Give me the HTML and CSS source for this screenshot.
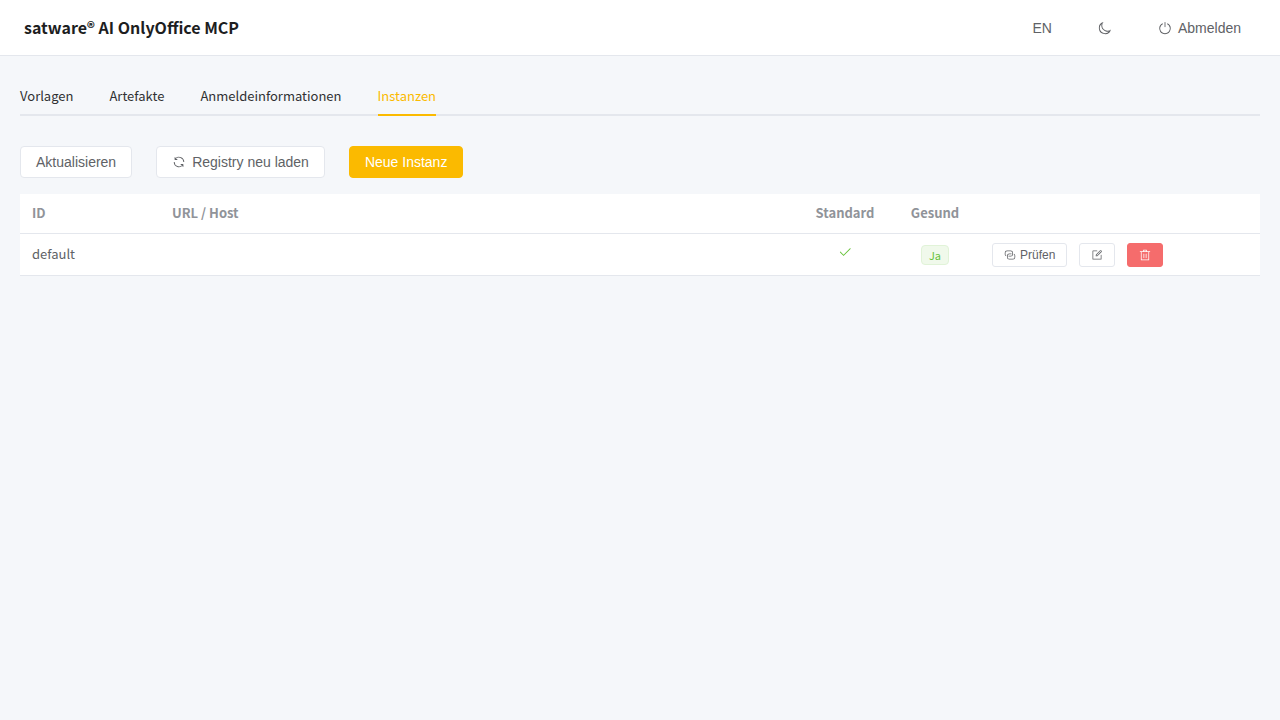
FILE: index.html
```html
<!DOCTYPE html>
<html lang="de">
<head>
  <meta charset="utf-8">
  <meta name="viewport" content="width=device-width, initial-scale=1">
  <title>satware® AI OnlyOffice MCP</title>
  <link rel="stylesheet" href="styles.css">
</head>
<body>
  <header class="topbar">
    <h1 class="brand">satware® AI OnlyOffice MCP</h1>
    <div class="topbar-actions">
      <button class="btn btn-text" type="button">EN</button>
      <button class="btn btn-text" type="button" aria-label="Dunkles Design">
        <svg class="icon" viewBox="0 0 1024 1024" aria-hidden="true"><path d="M240.448 240.448a384 384 0 1 0 559.424 525.696 448 448 0 0 1-542.016-542.08 391 391 0 0 0-17.408 16.384m181.056 362.048a384 384 0 0 0 525.632 16.384A448 448 0 1 1 405.056 76.8a384 384 0 0 0 16.448 525.696"/></svg>
      </button>
      <button class="btn btn-text" type="button">
        <svg class="icon" viewBox="0 0 1024 1024" aria-hidden="true"><path d="M352 159.872V230.4a352 352 0 1 0 320 0v-70.528A416.128 416.128 0 0 1 512 960a416 416 0 0 1-160-800.128z"/><path d="M512 64q32 0 32 32v320q0 32-32 32t-32-32V96q0-32 32-32"/></svg>
        Abmelden
      </button>
    </div>
  </header>

  <main class="content">
    <nav class="tabs">
      <a class="tab" href="#vorlagen">Vorlagen</a>
      <a class="tab" href="#artefakte">Artefakte</a>
      <a class="tab" href="#anmeldeinformationen">Anmeldeinformationen</a>
      <a class="tab tab-active" href="#instanzen" aria-current="page">Instanzen</a>
    </nav>

    <div class="toolbar">
      <button class="btn" type="button">Aktualisieren</button>
      <button class="btn" type="button">
        <svg class="icon" viewBox="0 0 1024 1024" aria-hidden="true"><path d="M771.776 794.88A384 384 0 0 1 128 512h64a320 320 0 0 0 555.712 216.448H654.72a32 32 0 1 1 0-64h149.056a32 32 0 0 1 32 32v148.928a32 32 0 1 1-64 0v-50.56zM276.288 295.616h92.992a32 32 0 0 1 0 64H220.16a32 32 0 0 1-32-32V178.56a32 32 0 0 1 64 0v50.56A384 384 0 0 1 896.128 512h-64a320 320 0 0 0-555.776-216.384z"/></svg>
        Registry neu laden
      </button>
      <button class="btn btn-primary" type="button">Neue Instanz</button>
    </div>

    <table class="table">
      <colgroup>
        <col class="col-id">
        <col>
        <col class="col-flag">
        <col class="col-flag">
        <col class="col-actions">
      </colgroup>
      <thead>
        <tr>
          <th scope="col">ID</th>
          <th scope="col">URL / Host</th>
          <th class="center" scope="col">Standard</th>
          <th class="center" scope="col">Gesund</th>
          <td></td>
        </tr>
      </thead>
      <tbody>
        <tr>
          <td>default</td>
          <td></td>
          <td class="center">
            <svg class="icon icon-check" viewBox="0 0 1024 1024" role="img" aria-label="Standard"><path d="M406.656 706.944 195.84 496.256a32 32 0 1 0-45.248 45.248l256 256 512-512a32 32 0 0 0-45.248-45.248L406.592 706.944z"/></svg>
          </td>
          <td class="center"><span class="tag">Ja</span></td>
          <td class="actions">
            <div class="row-actions">
              <button class="btn btn-small" type="button">
                <svg class="icon" viewBox="0 0 1024 1024" aria-hidden="true"><path d="M640 384v64H448a128 128 0 0 0-128 128v128a128 128 0 0 0 128 128h320a128 128 0 0 0 128-128V576a128 128 0 0 0-64-110.848V394.88c74.56 26.368 128 97.472 128 181.056v128a192 192 0 0 1-192 192H448a192 192 0 0 1-192-192V576a192 192 0 0 1 192-192z"/><path d="M384 640v-64h192a128 128 0 0 0 128-128V320a128 128 0 0 0-128-128H256a128 128 0 0 0-128 128v128a128 128 0 0 0 64 110.848v70.272A192.06 192.06 0 0 1 64 448V320a192 192 0 0 1 192-192h320a192 192 0 0 1 192 192v128a192 192 0 0 1-192 192z"/></svg>
                Prüfen
              </button>
              <button class="btn btn-small" type="button" aria-label="Bearbeiten">
                <svg class="icon" viewBox="0 0 1024 1024" aria-hidden="true"><path d="M832 512a32 32 0 1 1 64 0v352a32 32 0 0 1-32 32H160a32 32 0 0 1-32-32V160a32 32 0 0 1 32-32h352a32 32 0 0 1 0 64H192v640h640z"/><path d="m469.952 554.24 52.8-7.552L847.104 222.4a32 32 0 1 0-45.248-45.248L477.44 501.44l-7.552 52.8zm422.4-422.4a96 96 0 0 1 0 135.808l-331.84 331.84a32 32 0 0 1-18.112 9.088L436.8 623.68a32 32 0 0 1-36.224-36.224l15.104-105.6a32 32 0 0 1 9.024-18.112l331.904-331.84a96 96 0 0 1 135.744 0z"/></svg>
              </button>
              <button class="btn btn-small btn-danger" type="button" aria-label="Löschen">
                <svg class="icon" viewBox="0 0 1024 1024" aria-hidden="true"><path d="M160 256H96a32 32 0 0 1 0-64h256V95.936a32 32 0 0 1 32-32h256a32 32 0 0 1 32 32V192h256a32 32 0 1 1 0 64h-64v672a32 32 0 0 1-32 32H192a32 32 0 0 1-32-32zm448-64v-64H416v64zM224 896h576V256H224zm192-128a32 32 0 0 1-32-32V416a32 32 0 0 1 64 0v320a32 32 0 0 1-32 32m192 0a32 32 0 0 1-32-32V416a32 32 0 0 1 64 0v320a32 32 0 0 1-32 32"/></svg>
              </button>
            </div>
          </td>
        </tr>
      </tbody>
    </table>
  </main>
</body>
</html>
```

FILE: styles.css
```css
* {
  box-sizing: border-box;
}

body {
  margin: 0;
  background: #f5f7fa;
  color: #606266;
  font-family: "Noto Sans CJK SC", "Noto Sans", sans-serif;
  font-size: 13px;
}

.topbar {
  display: flex;
  align-items: center;
  justify-content: space-between;
  min-height: 56px;
  padding: 0 23px 0 24px;
  background: #fff;
  border-bottom: 1px solid #e4e7ed;
}

.brand {
  margin: 0;
  padding-bottom: 2px;
  color: #1d1e1f;
  font-size: 16px;
  font-weight: 700;
  line-height: 22px;
}

.topbar-actions {
  display: flex;
  gap: 14px;
}

.btn {
  display: inline-flex;
  align-items: center;
  justify-content: center;
  gap: 6px;
  height: 32px;
  padding: 0 15px;
  border: 1px solid #e4e7ed;
  border-radius: 4px;
  background: #fff;
  color: #606266;
  font-family: "Liberation Sans", Arial, sans-serif;
  font-size: 14px;
  line-height: 14px;
  white-space: nowrap;
  cursor: pointer;
}

.btn-text {
  border-color: transparent;
  background: transparent;
}

.btn-primary {
  border-color: #fbba00;
  background: #fbba00;
  color: #fff;
}

.btn-small {
  gap: 4px;
  height: 24px;
  padding: 0 11px;
  border-radius: 3px;
  font-size: 12px;
  line-height: 12px;
}

.btn-danger {
  border-color: #f56c6c;
  background: #f56c6c;
  color: #fff;
}

.icon {
  width: 1em;
  height: 1em;
  fill: currentColor;
}

.content {
  padding: 20px;
}

.tabs {
  display: flex;
  gap: 36px;
  margin-bottom: 30px;
  box-shadow: inset 0 -2px #e4e7ed;
}

.tab {
  height: 40px;
  border-bottom: 2px solid transparent;
  color: #303133;
  line-height: 40px;
  text-decoration: none;
}

.tab-active {
  border-bottom-color: #fbba00;
  color: #fbba00;
}

.toolbar {
  display: flex;
  gap: 24px;
  margin-bottom: 16px;
}

.table {
  width: 100%;
  border-collapse: separate;
  border-spacing: 0;
  table-layout: fixed;
  background: #fff;
}

.col-id {
  width: 140px;
}

.col-flag {
  width: 90px;
}

.col-actions {
  width: 280px;
}

.table th,
.table td {
  padding: 8px 12px 9px;
  border-bottom: 1px solid #e4e7ed;
  line-height: 22px;
  text-align: left;
}

.table th {
  color: #909399;
  font-weight: 700;
}

.table tbody td {
  height: 42px;
}

.table .actions {
  padding: 9px 12px 8px;
}

.table .center {
  text-align: center;
}

.icon-check {
  width: 14px;
  height: 14px;
  color: #67c23a;
}

.tag {
  display: inline-block;
  height: 20px;
  padding: 0 7px;
  border: 1px solid #e1f3d8;
  border-radius: 4px;
  background: #f0f9eb;
  color: #67c23a;
  font-size: 11px;
  line-height: 18px;
  vertical-align: middle;
}

.row-actions {
  display: flex;
  gap: 12px;
}
```
